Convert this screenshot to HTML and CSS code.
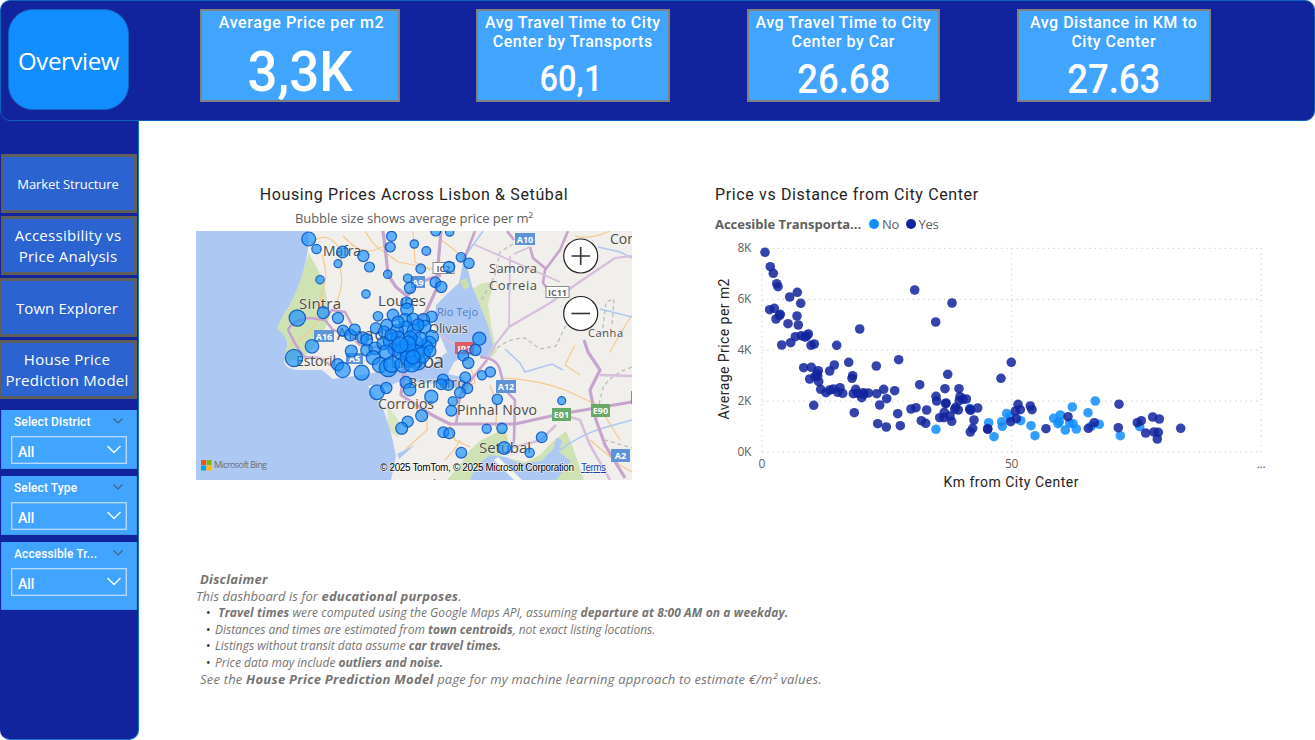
FILE: index.html
```html
<!DOCTYPE html>
<html lang="en">
<head>
<meta charset="utf-8">
<title>Overview</title>
<link rel="stylesheet" href="styles.css">
</head>
<body>
<div class="page">
  <header class="top">
    <div class="overview">Overview</div>
    <div class="kpis">
      <section class="kpi kpi-wide">
        <h2 class="kpi-title">Average Price per m2</h2>
        <div class="kpi-value kpi-value-xl">3,3K</div>
      </section>
      <section class="kpi">
        <h2 class="kpi-title">Avg Travel Time to City<br>Center by Transports</h2>
        <div class="kpi-value kpi-value-sm">60,1</div>
      </section>
      <section class="kpi">
        <h2 class="kpi-title">Avg Travel Time to City<br>Center by Car</h2>
        <div class="kpi-value">26.68</div>
      </section>
      <section class="kpi">
        <h2 class="kpi-title">Avg Distance in KM to<br>City Center</h2>
        <div class="kpi-value">27.63</div>
      </section>
    </div>
  </header>

  <div class="body">
    <aside class="side">
      <nav class="nav">
        <a class="nav-item nav-small">Market Structure</a>
        <a class="nav-item">Accessibility vs<br>Price Analysis</a>
        <a class="nav-item nav-flush nav-town">Town Explorer</a>
        <a class="nav-item nav-flush">House Price<br>Prediction Model</a>
      </nav>
      <div class="slicers">
        <div class="slicer">
          <div class="slicer-head"><span>Select District</span><svg class="chev-s" viewBox="0 0 10 6"><path d="M.5 .5 5 5 9.500 .5"/></svg></div>
          <div class="drop"><span>All</span><svg class="chev" viewBox="0 0 14 9"><path d="M.5 1 7 7.500 13.500 1"/></svg></div>
        </div>
        <div class="slicer">
          <div class="slicer-head"><span>Select Type</span><svg class="chev-s" viewBox="0 0 10 6"><path d="M.5 .5 5 5 9.500 .5"/></svg></div>
          <div class="drop"><span>All</span><svg class="chev" viewBox="0 0 14 9"><path d="M.5 1 7 7.500 13.500 1"/></svg></div>
        </div>
        <div class="slicer slicer-tall">
          <div class="slicer-head"><span>Accessible Tr...</span><svg class="chev-s" viewBox="0 0 10 6"><path d="M.5 .5 5 5 9.500 .5"/></svg></div>
          <div class="drop"><span>All</span><svg class="chev" viewBox="0 0 14 9"><path d="M.5 1 7 7.500 13.500 1"/></svg></div>
        </div>
      </div>
    </aside>

    <main class="main">
      <div class="panels">
        <section class="panel-map">
          <h3 class="title">Housing Prices Across Lisbon &amp; Setúbal</h3>
          <p class="subtitle">Bubble size shows average price per m²</p>
          <svg class="map" viewBox="196 231 436 249">
            <rect x="196" y="231" width="436" height="249" fill="#f1efeb"/>
            <!-- parkland -->
            <path fill="#cfe2b4" d="M309 253 C316 268 324 278 325 290 L330 315 C325 335 315 345 305 357 L285 362 276 328 Q299 290 309 253Z"/>
            <path fill="#d3e4b9" d="M463 295 L482 283 494 282 488 305 492 330 497 352 490 358 475 320Z"/>
            <path fill="#cfe2b4" d="M447 480 L462 462 470 450 480 441 505 428 508 440 500 456 525 462 540 455 552 442 566 431 572 445 584 480Z"/>
            <path fill="#d8e6c2" d="M387 405 L402 425 398 437 388 430Z"/>
            <!-- ocean, estuary and Sado inlet -->
            <path fill="#adc8f2" d="M196 231 H308 C311 255 300 285 289 306 Q281 318 277 328 C281 333 288 338 287 345 L284 362 Q287 370 300 370 L322 370 333 379 347 377 Q368 374 383 371 L410 370 430 366 447 352 441 338 434 325 436 305 447 294 459 283 463 262 468 270 472 286 479 303 488 325 493 345 487 357 467 355 454 362 448 374 462 377 470 384 462 390 440 384 422 383 402 380 388 387 377 384 368 386 374 395 383 408 391 433 396 456 391 480 H196Z"/>
            <path fill="#c9dfae" d="M460 281 L466 278 470 286 464 290Z"/>
            <path fill="#adc8f2" d="M470 480 L476 466 490 455 506 457 520 464 541 461 554 448 556 438 562 440 559 452 571 461 556 480Z"/>
            <path fill="#f3f6ed" d="M498 457 L522 480 514 480 494 460Z"/>
            <path fill="#adc8f2" d="M397 454 L415 445 399 459Z"/>
            <!-- minor roads -->
            <g fill="none" stroke="#f5c98c" stroke-width="1.200">
              <path d="M311 243 C325 231 335 240 342 252 L340 268 C346 290 334 300 336 312"/>
              <path d="M322 255 Q329 275 323 290 T325 312"/>
              <path d="M343 236 Q360 255 375 250 L388 244 M365 231 Q375 248 383 251 L398 262 440 270"/>
              <path d="M413 231 L415 262 430 270 M441 240 Q455 250 463 257"/>
              <path d="M575 236 Q590 240 610 231 M632 315 Q622 330 610 352"/>
              <path d="M490 385 Q500 410 495 425 L507 440 M503 378 Q540 380 565 390 L598 405 620 440"/>
              <path d="M427 400 L427 430 405 450 M412 404 L425 420 M399 385 L415 382 M590 440 L620 465 632 472"/>
              <path d="M450 425 L455 440 470 447 M445 460 Q455 450 460 440 M290 345 Q310 335 318 320"/>
              <path d="M467 355 L475 382 450 405 M575 345 L565 365 580 375"/>
            </g>
            <g fill="none" stroke="#bdbdbb" stroke-width="1.300" stroke-dasharray="4 3">
              <path d="M513 244 L500 252 495 275 480 303 M497 348 Q510 338 525 338 L540 349 556 346 565 327 577 320"/>
              <path d="M632 367 Q610 375 603 388 L595 420 605 440 632 448 M602 335 L606 302 614 299 612 325"/>
            </g>
            <path fill="none" stroke="#adc8f2" stroke-width="1.600" d="M483 231 L468 252 463 262 M505 349 L520 363 525 372 552 364 563 370 M598 247 L620 252 632 258 M600 309 L632 317 M560 450 Q580 435 603 428 L632 420"/>
            <!-- motorways -->
            <g fill="none" stroke="#c6a4cd" stroke-width="2.600" stroke-linejoin="round">
              <path stroke-width="3.200" d="M383 231 L386 255 388 275 396 287 407 296 420 282 441 275"/>
              <path stroke-width="3.200" d="M441 231 L438 265 436 290 426 312 412 330 405 345"/>
              <path d="M475 231 L463 262 M507 231 L514 240 M530 247 L533 258 545 268 M568 231 L560 250 545 270 543 283 552 294"/>
              <path stroke="#d8bedd" stroke-width="1.800" d="M473 244 L505 258 560 282 M510 256 L509 327 M514 254 L530 247"/>
              <path stroke="#d8bedd" stroke-width="2.200" d="M632 256 L615 258 575 285 550 303 509 327 495 345 487 360"/>
              <path d="M487 360 L475 375 460 395 456 425"/>
              <path d="M288 330 Q292 320 310 318 L325 320 333 330 350 335 360 345 388 349 407 340"/>
              <path d="M325 318 L332 310 345 312 352 325 M288 330 L296 345 304 357 M303 357 L320 358 340 372"/>
              <path stroke-width="3.200" d="M405 345 L404 372 401 395 432 415 450 424 515 424 560 414 632 402"/>
              <path d="M480 357 Q497 358 500 370 L505 390 515 400 514 440 511 452"/>
              <path stroke-width="3.200" d="M584 340 L588 352 600 370 590 390 596 420 605 445 625 478"/>
              <path stroke="#d8bedd" d="M560 414 L580 420 590 445 610 480 M600 375 L632 376 M511 448 L541 440 556 425 M440 335 L455 345"/>
            </g>
            <g class="towns">
              <text x="323" y="256" textLength="38" font-size="14">Mafra</text>
              <text x="299" y="309" textLength="42" font-size="15">Sintra</text>
              <text x="378" y="306" textLength="48" font-size="15">Loures</text>
              <text x="337" y="340" textLength="76" font-size="16">Amadora</text>
              <text x="296" y="366" textLength="40" font-size="14">Estoril</text>
              <text x="378" y="409" textLength="56" font-size="14">Corroios</text>
              <text x="408" y="388" textLength="58" font-size="14">Barreiro</text>
              <text x="390" y="368" textLength="54" font-size="20">Lisboa</text>
              <text x="489" y="273" textLength="48" font-size="13">Samora</text>
              <text x="489" y="290" textLength="48" font-size="13">Correia</text>
              <text x="429" y="333" textLength="39" font-size="13">Olivais</text>
              <text x="457" y="415" textLength="80" font-size="14">Pinhal Novo</text>
              <text x="479" y="453" textLength="52" font-size="15">Setúbal</text>
              <text x="588" y="337" textLength="35" font-size="11">Canha</text>
              <text x="610" y="244" font-size="14">Coruche</text>
              <text x="394" y="490" font-size="14">Sesimbra</text>
              <text x="437" y="316" textLength="41" font-size="11" class="water">Rio Tejo</text>
            </g>
            <g class="shields">
              <rect x="515" y="233" width="20" height="12" fill="#5f93d8"/><text x="525" y="242.500">A10</text>
              <rect x="411" y="276" width="14" height="12" fill="#5f93d8"/><text x="418" y="285.500">A9</text>
              <rect x="314" y="330" width="20" height="12" fill="#5f93d8"/><text x="324" y="339.500">A16</text>
              <rect x="346" y="353" width="17" height="11" fill="#5f93d8"/><text x="354.500" y="362">A5</text>
              <rect x="496" y="380" width="20" height="13" fill="#5f93d8"/><text x="506" y="390">A12</text>
              <rect x="611" y="449" width="19" height="13" fill="#5f93d8"/><text x="620.500" y="459">A2</text>
              <rect x="631" y="391" width="3" height="13" fill="#5f93d8"/>
              <rect x="455" y="342" width="19" height="12" fill="#dd5d64"/><text x="464.500" y="351.500">IP1</text>
              <rect x="552" y="408" width="19" height="13" fill="#68a968"/><text x="561.500" y="418">E01</text>
              <rect x="591" y="404" width="19" height="13" fill="#68a968"/><text x="600.500" y="414">E90</text>
              <g class="plain">
                <rect x="433" y="262.500" width="21" height="11"/><text x="443.500" y="271.500">IC2</text>
                <rect x="546" y="286.500" width="23" height="11"/><text x="557.500" y="295.500">IC11</text>
              </g>
            </g>
            <g id="bubbles" class="bubbles"></g>
            <g class="zoomer">
              <circle cx="580.700" cy="256" r="17"/><path d="M571.500 256 H590 M580.700 247 V265"/>
              <circle cx="580.700" cy="313.500" r="17"/><path d="M571.500 313.500 H590"/>
            </g>
            <path fill="#f25022" d="M201 460h5v5h-5z"/><path fill="#7fba00" d="M206.500 460h5v5h-5z"/>
            <path fill="#00a4ef" d="M201 465.500h5v5h-5z"/><path fill="#ffb900" d="M206.500 465.500h5v5h-5z"/>
            <text class="bing" x="214" y="468" textLength="53">Microsoft Bing</text>
            <text class="copy" x="380" y="471" textLength="194">© 2025 TomTom, © 2025 Microsoft Corporation</text>
            <text class="terms" x="581" y="471" textLength="25">Terms</text>
          </svg>
        </section>

        <section class="panel-chart">
          <h3 class="title">Price vs Distance from City Center</h3>
          <div class="legend">
            <b>Accesible Transporta...</b>
            <span class="key key-no"></span><span class="key-label">No</span>
            <span class="key key-yes"></span><span class="key-label">Yes</span>
          </div>
          <svg class="chart" viewBox="715 240 555 252">
            <g class="grid">
              <path d="M762 248.300H1261 M762 299.300H1261 M762 350.200H1261 M762 401.200H1261 M762 452.100H1261"/>
              <path d="M761.800 248V452 M1011.500 248V452 M1261.300 248V452"/>
            </g>
            <g class="ylab">
              <text x="751" y="252">8K</text><text x="751" y="303">6K</text><text x="751" y="354">4K</text>
              <text x="751" y="405">2K</text><text x="751" y="456">0K</text>
            </g>
            <g class="xlab"><text x="761.700" y="468">0</text><text x="1011.500" y="468">50</text><text x="1261" y="468">...</text></g>
            <g id="dots-no" fill="#118dff" fill-opacity=".85"></g>
            <g id="dots-yes" fill="#12239e" fill-opacity=".85"></g>
            <text class="axis" x="1011" y="487" textLength="135">Km from City Center</text>
            <text class="axis" transform="translate(729 349) rotate(-90)" textLength="141">Average Price per m2</text>
          </svg>
        </section>
      </div>

      <section class="note">
        <p class="n3"><b>Disclaimer</b></p>
        <p class="intro">This dashboard is for <b>educational purposes</b>.</p>
        <ul>
          <li>&nbsp;<b>Travel times</b> were computed using the Google Maps API, assuming <b>departure at 8:00 AM on a weekday.</b></li>
          <li class="tight">Distances and times are estimated from <b>town centroids</b>, not exact listing locations.</li>
          <li class="tight">Listings without transit data assume <b>car travel times.</b></li>
          <li class="tight">Price data may include <b>outliers and noise.</b></li>
        </ul>
        <p class="n3 see">See the <b>House Price Prediction Model</b> page for my machine learning approach to estimate €/m² values.</p>
      </section>
    </main>
  </div>
</div>
<script src="data.js"></script>
</body>
</html>
```
FILE: styles.css
```css
* { box-sizing: border-box; }
body { margin: 0; background: #fff; font-family: "Open Sans", "Noto Sans", sans-serif; }
h2, h3, p, ul { margin: 0; padding: 0; font-weight: 400; }
.page { width: 1315px; height: 740px; overflow: hidden; display: flex; flex-direction: column; }

.top { flex: none; height: 121px; background: #12239e; border: 1px solid #0b63b8; border-radius: 10px; padding: 8px 0 0 7px; display: flex; align-items: flex-start; position: relative; z-index: 1; }
.overview { width: 121px; height: 101px; border-radius: 25px; background: #118dff; border: 1px solid #1267bd; color: #fff; font-size: 24px; letter-spacing: -.4px; display: flex; align-items: center; justify-content: center; padding-top: 2px; }
.kpis { display: flex; gap: 77px; margin-left: 71px; }
.kpi { width: 193.500px; height: 93px; background: #41a4ff; border: 2px solid #808080; color: #fff; text-align: center; font-family: Roboto, sans-serif; display: flex; flex-direction: column; padding-top: 2px; overflow: hidden; }
.kpi-wide { width: 200px; margin-right: -1px; }
.kpi-wide .kpi-title { padding-left: 3px; letter-spacing: .6px; }
.kpi-title { font-size: 16px; font-weight: 500; line-height: 19px; letter-spacing: .5px; white-space: nowrap; }
.kpi-value { font-weight: 500; font-size: 41px; line-height: 46px; margin-top: 5px; transform: scaleX(.89); }
.kpi-value-xl { font-size: 55px; line-height: 64px; margin-top: 8px; transform: scaleX(.96); }
.kpi-value-sm { font-size: 37px; line-height: 42px; margin-top: 7px; transform: scaleX(.88); padding-right: 4px; }

.body { flex: 1; display: flex; min-height: 0; }
.side { width: 139px; margin-top: -12px; padding: 45px 0 0 0; background: #12239e; border: 1px solid #1470c8; border-left-color: #12239e; border-top: 0; border-radius: 0 0 10px 10px; display: flex; flex-direction: column; }
.nav { display: flex; flex-direction: column; gap: 3px; padding-right: 1px; }
.nav-item { height: 59px; border: 3px solid #605e5c; background: #2b63d1; color: #fff; font-size: 15px; line-height: 21px; letter-spacing: .27px; text-align: center; display: flex; align-items: center; justify-content: center; white-space: nowrap; padding: 1px 2px 0 0; }
.nav-small { font-size: 13px; letter-spacing: -.1px; }
.nav-town { letter-spacing: .1px; }
.nav-flush { margin-left: -1px; border-left-width: 2px; }
.slicers { display: flex; flex-direction: column; gap: 7px; margin-top: 11px; padding-right: 1px; }
.slicer { height: 59px; background: #41a4ff; border: 1px solid #3c97f0; border-top: 0; padding: 2px 9px 0; color: #fff; }
.slicer-tall { height: 68px; }
.slicer-head { display: flex; justify-content: space-between; align-items: center; height: 20px; padding: 0 4px 0 3px; font: 500 12px/20px Roboto, sans-serif; letter-spacing: .1px; }
.chev-s { width: 10px; height: 6px; fill: none; stroke: #44617f; stroke-width: 1.100; margin-top: -3px; }
.drop { height: 28px; margin-top: 4px; border: 1px solid #b4dafd; outline: 1px solid #6db8fd; outline-offset: -2px; display: flex; align-items: center; justify-content: space-between; padding: 3px 5px 0 6px; font: 500 14px/20px Roboto, sans-serif; }
.chev { width: 14px; height: 9px; fill: none; stroke: #fff; stroke-width: 1.300; margin-top: -4px; }

.main { flex: 1; padding: 63px 0 0 57px; }
.panels { display: flex; gap: 83px; }
.panel-map { width: 436px; text-align: center; }
.title { font: 400 16px/22px Roboto, sans-serif; letter-spacing: .63px; color: #252423; white-space: nowrap; }
.subtitle { margin: 2px 0 3px; font-size: 13px; line-height: 20px; letter-spacing: -.03px; color: #605e5c; }
.map { display: block; width: 436px; height: 249px; }
.towns text { font-family: "Open Sans", sans-serif; fill: #4d4b49; paint-order: stroke; stroke: #f5f3f0; stroke-width: 1.500px; stroke-opacity: .6; }
.towns .water { fill: #4c7fc9; stroke: none; }
.shields text { font: 700 9px "Open Sans", sans-serif; fill: #fff; text-anchor: middle; }
.shields .plain rect { fill: #fff; stroke: #888; }
.shields .plain text { fill: #666; }
.bubbles circle { fill: #118dff; fill-opacity: .65; stroke: #0650c0; stroke-width: 1.200; stroke-opacity: .85; }
.zoomer circle { fill: #fff; stroke: #222; stroke-width: 1.200; }
.zoomer path { stroke: #333; stroke-width: 1.600; fill: none; }
.bing { font: 400 9px "Open Sans", sans-serif; fill: #6c6f76; }
.copy, .terms { font: 400 10px "Liberation Sans", sans-serif; fill: #000; paint-order: stroke; stroke: #fff; stroke-width: 1.500px; stroke-opacity: .6; }
.terms { fill: #1b3fa8; text-decoration: underline; }

.legend { margin: 8px 0 6px; height: 20px; display: flex; align-items: center; font-size: 13px; color: #605e5c; }
.legend b { font-weight: 700; letter-spacing: -.03px; }
.key { width: 10px; height: 10px; border-radius: 50%; margin: 0 3px 0 8px; }
.key-no { background: #118dff; }
.key-label { letter-spacing: -.3px; }
.key-yes { background: #12239e; margin-left: 6.500px; }
.chart { display: block; width: 555px; height: 252px; }
.grid path { fill: none; stroke: #d2d0ce; stroke-width: 1.200; stroke-dasharray: 1.200 4; }
.ylab text { text-anchor: end; font: 400 12px "Open Sans", sans-serif; fill: #605e5c; letter-spacing: -.3px; }
.xlab text { text-anchor: middle; font: 400 12px "Open Sans", sans-serif; fill: #605e5c; letter-spacing: -.3px; }
.axis { font: 400 14px Roboto, sans-serif; fill: #252423; text-anchor: middle; }

.note { margin-top: 79px; font-size: 13px; line-height: 17px; font-style: italic; color: #767472; white-space: nowrap; letter-spacing: .1px; }
.note b { font-weight: 700; letter-spacing: .27px; }
.note .intro { letter-spacing: .04px; }
.note .intro b { letter-spacing: .22px; }
.n3 { padding-left: 4px; }
.n3.see { letter-spacing: .2px; }
.note ul { list-style: none; font-size: 12px; line-height: 16.600px; letter-spacing: .06px; padding-left: 10px; }
.note ul b { letter-spacing: .11px; }
.note .tight, .note .tight b { letter-spacing: -.02px; }
.note li { display: flex; white-space: pre; }
.note li::before { content: "•"; width: 9px; font-style: normal; color: #333; }
```
FILE: data.js
```javascript
const NS = "http://www.w3.org/2000/svg";
function plot(id, list) {
  const g = document.getElementById(id);
  for (const [x, y, r] of list) {
    const c = document.createElementNS(NS, "circle");
    c.setAttribute("cx", x);
    c.setAttribute("cy", y);
    c.setAttribute("r", r || 4.8);
    g.appendChild(c);
  }
}
plot("bubbles", [
  [308.7,239,7],[316.5,249,4.7],[342.5,252,5.8],[363.3,256,5.6],[338,263.7,4],[369.5,267,5],[320,279.7,4.2],[391.5,236.3,5],[390.3,247,5],[414.3,244,4.2],[387.7,274.3,4.2],[407.7,278.3,4.3],[410,288,5.6],[366,294,4.2],[323.3,312.7,6],[338,318,5.6],[297.3,318,8.2],[312,346.3,6.8],[294,358,8.6],[378,316.3,4.8],[393,315,5.8],[406.5,302.7,5.7],[407,309.5,6.3],[343,330.7,5.6],[350.3,335,5.8],[354.7,329.7,5.6],[362.7,337.7,5.8],[366.7,339.7,6],[376,328.3,5.6],[386.7,325,5.8],[384,331.7,5.7],[351.3,351,6],[366.7,350,6],[375.3,348.3,6.3],[383.3,343.3,6.3],[391.7,341.7,8.3],
  [435.7,231,5],[449.7,232,4.2],[426.3,251,4.4],[420.7,268.7,4.8],[461,257.3,4.8],[469,263.3,5.2],[449,267,5.7],[435.3,282.3,5.3],[441.3,287,5.6],[431.7,316.7,5.6],[423.3,320,6.3],[424.3,326.7,6.6],[432,337,6.6],[429,343,7],[425,348,8],[415,343,8],[479.3,338.7,6.6],[475.3,350,5.6],[463.3,355.5,5.5],
  [337.7,364.7,6],[342.7,370,7.6],[361.7,372.7,7.5],[373.3,357.7,7],[380,365,7.6],[388.3,367.7,9],[391.7,364.3,8],[403,364.5,8],[411.7,360,6],[418,362,8],[377,392.3,7.4],[386.3,388,5.6],[406,382.3,6],[409.7,389.7,6.2],[407.7,421.7,5.6],[401.7,428.3,6],
  [421.7,415.7,6],[431.3,396.7,6.6],[443,379.7,5.6],[448.3,385,5.4],[441.3,384.3,5.4],[465.3,377.3,5.4],[468.3,363,5.6],[467.3,388.3,5.4],[460,392.7,5.5],[452.7,401.3,4.6],[451.3,410.7,5.4],[482,375.3,4.6],[490.3,372,5.2],[497.3,399.3,5.2],[561.7,400.7,4],[486.7,428.7,4.6],[502,428.3,5.2],[541.7,437.3,5.4],[504.3,448,6.3],[529.7,452.7,4.6],[461.3,452.7,5.4],[443.3,432.3,5.4],[449.3,433.3,5.4],
  [405,320,6.5],[413,319,6],[406,328,7],[397,331,6.5],[414,331,7],[395,349,7],[402,352,8],[398,338,7],[386,352,7],[408,350,8.5],[416,352,8],[420,339,7],[410,338,7],[422,355,8],[430,351,6],[408,358,8],[398,322,6],[418,325,6],[412,364,8],[391,335,6],[408,344,8],[400,345,8],[413,357,7]
]);
plot("dots-no", [
  [936,429.3],[988.7,422.7],[994,436.7],[1001.7,421.7],[1002.3,426.3],[1006.7,413.5],[970,408.5],[1010,417],[1020.7,420.7],[1031,425.7],[1035,435.7],[1053.7,418.3],[1060.3,415],[1059.3,421.7],[1058,423.7],[1072.3,407],[1088,412.7],[1095.3,401],[1069.7,423],[1073,423.7],[1076.3,429],[1065.3,430],[1091.5,426],[1099.3,424.3],[1120.3,435.7],[1139.7,426.7]
]);
plot("dots-yes", [
  [765,252.3],[770.3,266.7],[773.3,273.3],[776.7,283.7],[778,286.7],[797.3,292.3],[789.7,297],[800.7,303.3],[769.7,309.7],[774.3,308.3],[780.3,314.3],[779.3,315.7],[776,319],[788,323.7],[797,316],[798.3,325],[914.7,290],[952,303],[935.7,322],[859.7,329],
  [781.7,345],[790.7,342.7],[795.3,336.7],[801.3,335.7],[808.3,334],[805,337],[806.7,336],[811,345.3],[814.3,344],[836.7,345.3],[803.7,367.7],[811.3,367.3],[809.7,379],[818.3,370.7],[817,374],[815,376.7],[818.7,381.7],[817.7,376],[834.3,365],[829.7,371],[848.7,362.3],[852.7,375.7],[852,378.3],[876.3,366],[898.7,359.7],[820.7,389.3],[826,392.7],[829.7,390],[833.3,389],[837.7,392.3],[840,387.7],[842.7,393.3],[813.7,405.3],[855.7,389.3],[853.3,393.7],[857.7,393.3],[863.3,392.7],[861.7,397.7],[863.7,394.3],[868.3,393],[876.7,393.7],[883.7,389.3],[894.7,390.7],[886.7,398.7],[879.7,405],[854.3,412.7],[897.7,413.7],[877.7,423.7],[886.3,427],[900.3,425.7],[919.7,384.7],[947.7,374.3],[945,388.7],[959,388.7],[936,396.3],[936.7,401],[946,403],[945.7,403.7],[960,396.7],[959.3,400.7],[963,399.3],[966.3,399],[955.7,407.3],[954.7,409.3],[958.3,410],[970.7,410.3],[969.7,409.3],[977.7,408],[911,409],[916,407.7],[926.7,410],[921.3,420.7],[925.7,423.3],[944.3,412.3],[939.7,417.7],[944,417.7],[950,416],[951.7,421.3],[974,420],[972.7,428.3],[970.3,432],[987.7,429],[987.7,429],[1001,378.3],[1011.3,362.3],[1010.7,421.7],
  [1018,404.3],[1015.3,411],[1020.3,409.7],[1030.3,406],[1032,409.7],[1016.3,418.7],[1046,428.7],[1068,416.7],[1094.3,422.7],[1088.3,428.3],[1119,404.2],[1118.3,427.7],[1137.3,422.7],[1141.3,420.7],[1152.7,417],[1159.3,419],[1145.7,433],[1154,432],[1158.3,432.3],[1157.3,439],[1180.7,428.3]
]);
```
